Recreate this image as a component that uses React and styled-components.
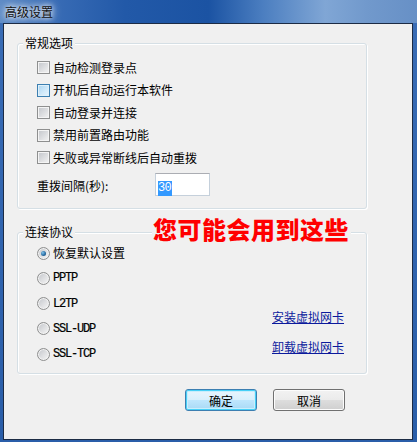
import React from 'react';
import styled, { createGlobalStyle, css } from 'styled-components';

const GlobalStyle = createGlobalStyle`
  html, body {
    margin: 0;
    padding: 0;
    background: #2f64b0;
  }
  body {
    font-family: "Noto Sans CJK SC", "Liberation Sans", sans-serif;
    font-size: 12px;
    color: #000;
  }
`;

const options = [
  { id: 1, label: '自动检测登录点' },
  { id: 2, label: '开机后自动运行本软件', hot: true },
  { id: 3, label: '自动登录并连接' },
  { id: 4, label: '禁用前置路由功能' },
  { id: 5, label: '失败或异常断线后自动重拨' },
];

const protocols = [
  { id: 'default', label: '恢复默认设置', checked: true },
  { id: 'pptp', label: 'PPTP', mono: true },
  { id: 'l2tp', label: 'L2TP', mono: true },
  { id: 'sslu', label: 'SSL-UDP', mono: true },
  { id: 'sslt', label: 'SSL-TCP', mono: true },
];

export default function App() {
  return (
    <>
      <GlobalStyle />
      <Window>
        <TitleBar>
          <TitleText>高级设置</TitleText>
        </TitleBar>
        <Client>
          <GroupBox $top={19} $height={166}>
            <GroupTitle>常规选项</GroupTitle>
            <OptionList>
              {options.map(({ id, label, hot }) => (
                <OptionRow key={id}>
                  <CheckBox $hot={hot} />
                  <span>{label}</span>
                </OptionRow>
              ))}
            </OptionList>
            <IntervalRow>
              <IntervalLabel>重拨间隔(秒):</IntervalLabel>
              <TextBox>
                <Selected>30</Selected>
              </TextBox>
            </IntervalRow>
          </GroupBox>

          <GroupBox $top={23} $height={142}>
            <GroupTitle>连接协议</GroupTitle>
            <Note>您可能会用到这些</Note>
            <ProtocolGrid>
              <RadioList>
                {protocols.map(({ id, label, checked, mono }) => (
                  <RadioRow key={id}>
                    <Radio $checked={checked} />
                    <RadioLabel $mono={mono}>{label}</RadioLabel>
                  </RadioRow>
                ))}
              </RadioList>
              <LinkList>
                <Link>安装虚拟网卡</Link>
                <Link>卸载虚拟网卡</Link>
              </LinkList>
            </ProtocolGrid>
          </GroupBox>

          <ButtonRow>
            <Button $primary>确定</Button>
            <Button>取消</Button>
          </ButtonRow>
        </Client>
      </Window>
    </>
  );
}

const Window = styled.div`
  width: 417px;
  height: 442px;
  display: flex;
  flex-direction: column;
  background: linear-gradient(180deg, #3a6db6 0%, #2f63ae 60%, #2a5ea9 100%);
  overflow: hidden;
`;

const TitleBar = styled.div`
  height: 23px;
  flex: none;
  display: flex;
  align-items: center;
  padding-left: 5px;
  background: linear-gradient(
    90deg,
    #5f8cc6 0%,
    #3a6db6 12%,
    #2259a8 30%,
    #1b53a3 50%,
    #4b7ec0 63%,
    #80a6d5 78%,
    #7199cc 88%,
    #6790c6 100%
  );
`;

const TitleText = styled.span`
  font-size: 12px;
  line-height: 14px;
  color: #111;
  text-shadow: 0 0 5px rgba(255, 255, 255, 0.95), 0 0 9px rgba(255, 255, 255, 0.8),
    0 0 12px rgba(255, 255, 255, 0.6);
`;

const Client = styled.div`
  flex: 1;
  margin: 0 4px 2px 3px;
  border: 1px solid #1c2b44;
  background: #f0f0f0;
  padding-left: 13px;
  display: flex;
  flex-direction: column;
`;

const GroupBox = styled.div`
  position: relative;
  box-sizing: border-box;
  width: 350px;
  height: ${(p) => p.$height}px;
  margin-top: ${(p) => p.$top}px;
  border: 1px solid #d5dfe5;
  border-radius: 3px;
  box-shadow: inset 1px 1px 0 #fff, 1px 1px 0 #fff;
  padding-left: 19px;
`;

const GroupTitle = styled.span`
  position: absolute;
  top: -8px;
  left: 5px;
  padding: 0 2px;
  background: #f0f0f0;
  line-height: 14px;
`;

const OptionList = styled.div`
  display: flex;
  flex-direction: column;
  padding-top: 12.8px;
`;

const OptionRow = styled.div`
  height: 22.4px;
  display: flex;
  align-items: center;
  gap: 3px;
  line-height: 14px;
`;

const boxBase = css`
  box-sizing: border-box;
  width: 13px;
  height: 13px;
  flex: none;
`;

const CheckBox = styled.span`
  ${boxBase};
  border: 1px solid ${(p) => (p.$hot ? '#3c7fb1' : '#8e8f8f')};
  box-shadow: inset 0 0 0 1px ${(p) => (p.$hot ? '#def0fa' : '#f4f4f4')};
  background: ${(p) =>
    p.$hot
      ? 'linear-gradient(135deg, #a9d4f1 0%, #d2eafa 60%, #e6f4fd 100%)'
      : 'linear-gradient(135deg, #c2c5ca 0%, #e0e1e3 60%, #f4f4f4 100%)'};
`;

const IntervalRow = styled.div`
  display: flex;
  align-items: center;
  margin-top: 4.2px;
`;

const IntervalLabel = styled.span`
  width: 118px;
  padding-top: 4px;
  line-height: 14px;
`;

const TextBox = styled.div`
  box-sizing: border-box;
  width: 55px;
  height: 23px;
  border: 1px solid #c5d0db;
  border-top-color: #abadb3;
  background: #fff;
  padding: 3px 0 0 2px;
`;

const Selected = styled.span`
  display: inline-block;
  background: #3399ff;
  color: #fff;
  font-family: "Liberation Mono", "DejaVu Sans Mono", monospace;
  font-size: 12px;
  letter-spacing: -0.8px;
  line-height: 15px;
  padding: 0 1px 0 0;
`;

const Note = styled.div`
  position: absolute;
  top: -17px;
  left: 134px;
  padding: 0 2px 0 1px;
  background: #f0f0f0;
  color: #ff0000;
  font-size: 24px;
  font-weight: 900;
  letter-spacing: 0.5px;
  line-height: 26px;
`;

const ProtocolGrid = styled.div`
  display: grid;
  grid-template-columns: 235px 1fr;
  padding-top: 7.4px;
`;

const RadioList = styled.div`
  display: flex;
  flex-direction: column;
`;

const RadioRow = styled.div`
  height: 25.3px;
  display: flex;
  align-items: center;
  gap: 3px;
`;

const Radio = styled.span`
  ${boxBase};
  position: relative;
  border-radius: 50%;
  border: 1px solid #8e8f8f;
  box-shadow: inset 0 0 0 1px #f2f2f2;
  background: linear-gradient(135deg, #c2c5ca 0%, #e0e1e3 55%, #f6f6f6 100%);
  ${(p) =>
    p.$checked &&
    css`
      &::after {
        content: '';
        position: absolute;
        left: 3px;
        top: 3px;
        width: 5px;
        height: 5px;
        border-radius: 50%;
        background: radial-gradient(circle at 35% 35%, #7fc2ea 0%, #2a6ea5 55%, #15466f 100%);
      }
    `}
`;

const RadioLabel = styled.span`
  line-height: 14px;
  ${(p) =>
    p.$mono &&
    css`
      font-family: "Liberation Mono", "DejaVu Sans Mono", monospace;
      font-size: 12px;
      letter-spacing: -1.2px;
      color: #000;
      -webkit-text-stroke: 0.2px #000;
    `}
`;

const LinkList = styled.div`
  display: flex;
  flex-direction: column;
  gap: 13px;
  padding-top: 68px;
`;

const Link = styled.a`
  color: #0b1a9c;
  text-decoration: underline;
  line-height: 17px;
  cursor: pointer;
`;

const ButtonRow = styled.div`
  display: flex;
  gap: 16px;
  margin-top: 15px;
  padding-left: 168px;
`;

const Button = styled.button`
  box-sizing: border-box;
  width: 72px;
  height: 22px;
  padding: 0;
  font-family: inherit;
  font-size: 12px;
  color: #000;
  border-radius: 3px;
  border: 1px solid #707070;
  box-shadow: inset 0 0 0 1px #fcfcfc;
  background: linear-gradient(180deg, #f2f2f2 0%, #ebebeb 48%, #dddddd 52%, #cfcfcf 100%);
  ${(p) =>
    p.$primary &&
    css`
      border-color: #3c7fb1;
      box-shadow: inset 0 0 0 1px #48d0f7, inset 0 0 0 2px #c9eefc;
      background: linear-gradient(180deg, #e9f5fd 0%, #d9f0fc 48%, #bee6fd 52%, #a7d9f5 100%);
    `}
`;
